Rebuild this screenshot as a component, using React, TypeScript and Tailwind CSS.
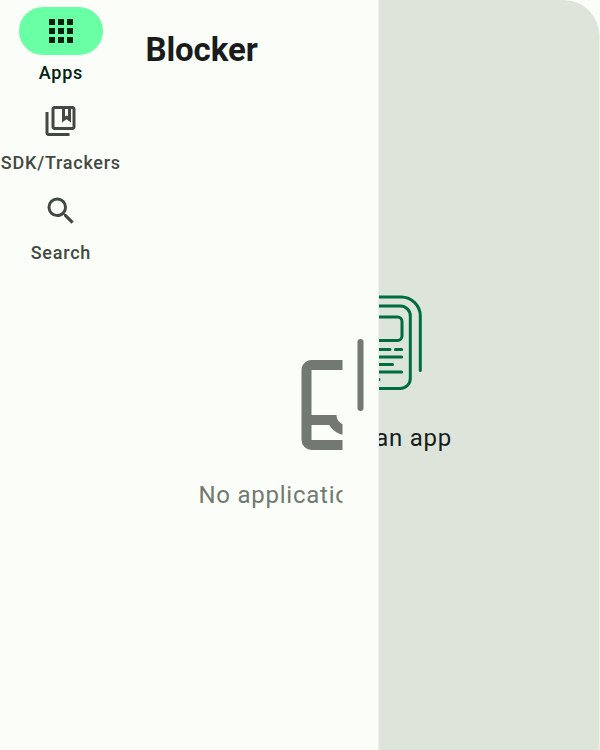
import type { ReactNode } from "react";
import { MdApps, MdOutlineCollectionsBookmark, MdOutlineInbox, MdSearch } from "react-icons/md";

function NavItem({ icon, label, active = false }: { icon: ReactNode; label: string; active?: boolean }) {
  return (
    <button className={`flex h-[90px] w-full flex-col items-center text-[36px] ${active ? "text-[#002110]" : "text-[#414942]"}`}>
      <span className={`flex h-12 w-[84px] shrink-0 items-center justify-center rounded-full ${active ? "bg-[#69ffa5]" : ""}`}>
        {icon}
      </span>
      <span className="mt-[6px] whitespace-nowrap pl-[0.75px] text-[18px] leading-6 font-medium tracking-[0.75px]">{label}</span>
    </button>
  );
}

function AppDocumentIcon() {
  return (
    <svg width="96" height="96" viewBox="0 0 96 96" className="shrink-0" fill="none" stroke="#006d3e" strokeWidth="3" strokeLinecap="round">
      <path d="M20 2H75.3A19 19 0 0 1 94.3 21V75.5" />
      <rect x="2" y="11" width="82.3" height="82.4" rx="10" />
      <rect x="12" y="22" width="64" height="23.4" rx="4.5" />
      <path d="M12 54.4H64M69.4 54.4H75.6M12 62H75.6M12 69.5H66.5M12 77H75.6M12 84.6H53" />
    </svg>
  );
}

export default function App() {
  return (
    <div className="flex h-[750px] w-[600px] overflow-hidden bg-[#fbfef8] font-[Roboto,sans-serif]">
      <nav className="flex w-[121px] shrink-0 flex-col pt-[7px]">
        <NavItem active icon={<MdApps />} label="Apps" />
        <NavItem icon={<MdOutlineCollectionsBookmark className="-translate-x-[0.5px]" />} label="SDK/Trackers" />
        <NavItem icon={<MdSearch />} label="Search" />
      </nav>
      <main className="flex w-[222px] shrink-0 -translate-x-[0.5px] flex-col overflow-hidden">
        <h1 className="ml-[25px] mt-[29px] text-[33px] leading-[42px] font-bold tracking-[-0.1px] text-[#191c1a]">Blocker</h1>
        <div className="mt-[274px] w-[450px] text-[#717971]">
          <MdOutlineInbox className="ml-[166px] size-[120px]" />
          <p className="ml-[78px] mt-[12px] text-[24px] leading-9 tracking-[0.75px]">No applications to display</p>
        </div>
      </main>
      <div className="flex w-[35px] shrink-0 items-center justify-center">
        <span className="h-[72px] w-[6px] -translate-x-[0.5px] rounded-full bg-[#717971]" />
      </div>
      <section className="flex w-[222px] shrink-0 flex-col items-start overflow-hidden rounded-tr-[36px] border-x border-[#ecf2ea] bg-[#dde5db] text-[#191c1a]">
        <div className="ml-[-53.5px] mt-[295px]">
          <AppDocumentIcon />
        </div>
        <p className="-ml-[81px] mt-[29px] whitespace-nowrap text-[24px] leading-9 tracking-[0.75px]">Select an app</p>
      </section>
    </div>
  );
}
